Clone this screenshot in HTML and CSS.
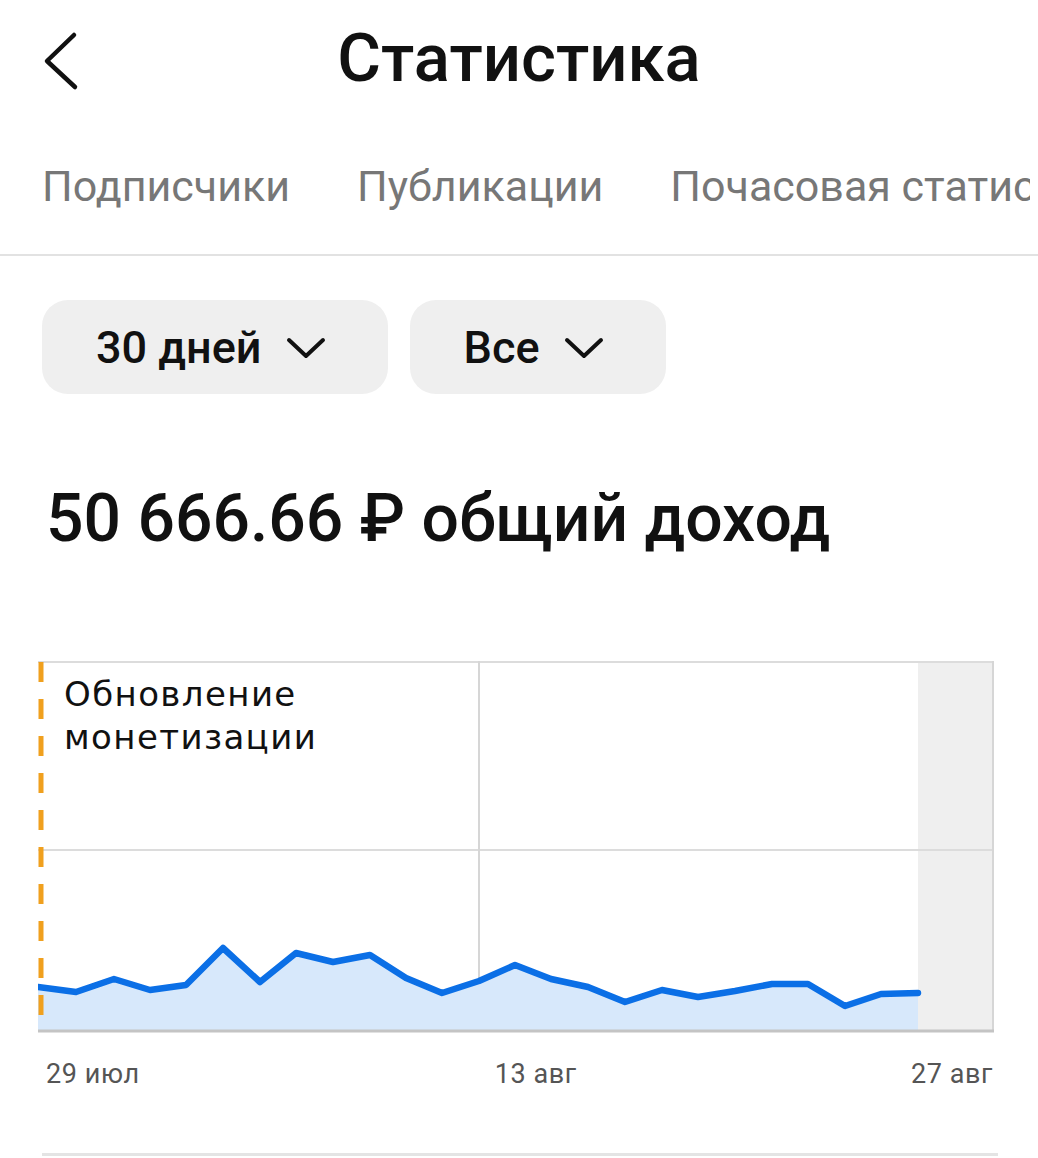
FILE: index.html
```html
<!DOCTYPE html>
<html lang="ru">
<head>
<meta charset="utf-8">
<title>Статистика</title>
<link rel="stylesheet" href="styles.css">
</head>
<body>
<header class="header">
  <svg class="back" width="36" height="60" viewBox="0 0 36 60"><path d="M31 4 L4 30 L32 56" fill="none" stroke="#111" stroke-width="4.5" stroke-linecap="round" stroke-linejoin="round"/></svg>
  <h1 class="title">Статистика</h1>
  <span></span>
</header>
<nav class="tabs">
  <span class="tab">Подписчики</span>
  <span class="tab">Публикации</span>
  <span class="tab tab-last">Почасовая статистика</span>
</nav>
<div class="filters">
  <button class="pill">30 дней <svg class="chev" width="40" height="22" viewBox="0 0 40 22"><path d="M3 3 L20 19 L37 3" fill="none" stroke="#111" stroke-width="4" stroke-linecap="round" stroke-linejoin="round"/></svg></button>
  <button class="pill">Все <svg class="chev" width="40" height="22" viewBox="0 0 40 22"><path d="M3 3 L20 19 L37 3" fill="none" stroke="#111" stroke-width="4" stroke-linecap="round" stroke-linejoin="round"/></svg></button>
</div>
<h2 class="total">50 666.66 ₽ общий доход</h2>
<section class="chart">
  <svg class="plot" width="957" height="372" viewBox="0 0 957 372">
    <rect x="880" y="0" width="76" height="370" fill="#efefef"/>
    <line x1="0" y1="1" x2="956" y2="1" stroke="#dcdcdc" stroke-width="2"/>
    <line x1="0" y1="189" x2="956" y2="189" stroke="#dcdcdc" stroke-width="2"/>
    <line x1="441" y1="0" x2="441" y2="370" stroke="#d6d6d6" stroke-width="2"/>
    <line x1="955" y1="0" x2="955" y2="370" stroke="#d6d6d6" stroke-width="2"/>
    <polygon fill="#d7e8fb" points="0,326 38,331 76,318 112,329 148,324 185,287 222,321 258,292 295,301 332,294 368,317 404,332 441,320 477,304 513,318 550,326 587,341 624,329 660,336 697,330 734,323 770,323 807,345 843,333 880,332 880,370 0,370"/>
    <polyline fill="none" stroke="#0b6fe6" stroke-width="6.5" stroke-linejoin="round" stroke-linecap="round" points="0,326 38,331 76,318 112,329 148,324 185,287 222,321 258,292 295,301 332,294 368,317 404,332 441,320 477,304 513,318 550,326 587,341 624,329 660,336 697,330 734,323 770,323 807,345 843,333 880,332"/>
    <line x1="0" y1="370" x2="956" y2="370" stroke="#c4c4c4" stroke-width="3"/>
    <line x1="3" y1="1" x2="3" y2="358" stroke="#f0a01e" stroke-width="5" stroke-dasharray="20 17"/>
  </svg>
  <div class="note">Обновление<br>монетизации</div>
</section>
<div class="axis">
  <span class="tick">29 июл</span>
  <span class="tick mid">13 авг</span>
  <span class="tick end">27 авг</span>
</div>
<hr class="bottom-rule">
</body>
</html>
```

FILE: styles.css
```css
* { box-sizing: border-box; }
html, body { margin: 0; padding: 0; background: #fff; }
body {
  width: 1038px;
  height: 1158px;
  overflow: hidden;
  font-family: Roboto, "Noto Sans", sans-serif;
  color: #111;
}
.header {
  display: grid;
  grid-template-columns: 1fr auto 1fr;
  align-items: center;
  height: 122px;
  padding: 0 43px 6px;
}
.back { display: block; margin-top: 6px; }
.title {
  margin: 0;
  font-size: 67px;
  font-weight: 500;
  line-height: 1;
}
.tabs {
  display: flex;
  gap: 67px;
  padding: 0 8px 4px 42px;
  height: 134px;
  align-items: center;
  white-space: nowrap;
  overflow: hidden;
  border-bottom: 2px solid #e2e2e2;
  margin: 0;
}
.tab {
  flex-shrink: 0;
  font-size: 43px;
  color: #777;
  font-weight: 400;
}
.tab-last {
  flex-shrink: 1;
  min-width: 0;
  overflow: hidden;
}
.filters {
  display: flex;
  gap: 22px;
  padding: 44px 0 0 42px;
}
.pill {
  display: flex;
  align-items: center;
  gap: 24px;
  height: 94px;
  padding: 0 62px 0 54px;
  border: none;
  border-radius: 26px;
  background: #efefef;
  font-family: Roboto, "Noto Sans", sans-serif;
  font-size: 45px;
  font-weight: 500;
  color: #111;
}
.chev { display: block; margin-top: 2px; }
.total {
  margin: 92px 0 0 46px;
  font-size: 66px;
  font-weight: 500;
  line-height: 1;
}
.chart {
  position: relative;
  margin: 109px 0 0 38px;
  width: 957px;
  height: 372px;
}
.plot { display: block; }
.note {
  position: absolute;
  left: 26px;
  top: 12px;
  font-family: "DejaVu Sans", Inter, sans-serif;
  font-size: 34px;
  letter-spacing: 1.4px;
  line-height: 43px;
  color: #111;
}
.axis {
  display: grid;
  grid-template-columns: 1fr 1fr 1fr;
  margin: 25px 0 0 46px;
  width: 947px;
  font-size: 27px;
  letter-spacing: 0.6px;
  color: #555;
}
.tick.mid { text-align: left; padding-left: 133px; }
.tick.end { text-align: right; }
.bottom-rule {
  margin: 63px 0 0 42px;
  width: 956px;
  border: none;
  border-top: 3px solid #e4e4e4;
}
```
